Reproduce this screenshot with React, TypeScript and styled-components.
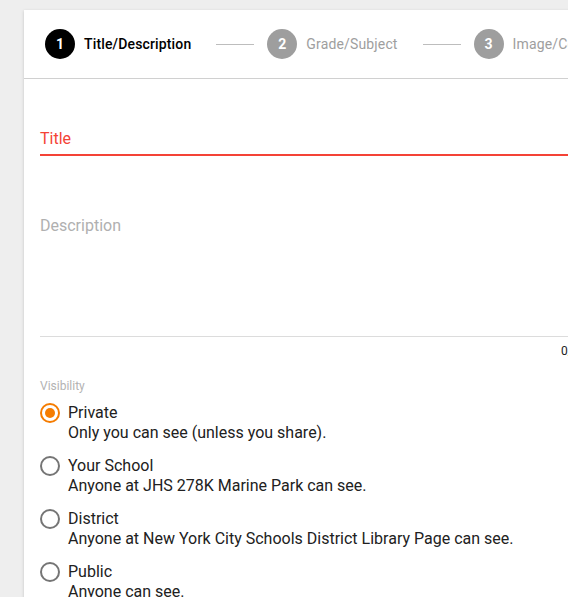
import React from 'react';
import styled, { createGlobalStyle } from 'styled-components';

const GlobalStyle = createGlobalStyle`
	html, body {
		margin: 0;
		padding: 0;
		background: #eeeeee;
		overflow: hidden;
		font-family: Roboto, 'Liberation Sans', sans-serif;
	}
`;

// 카드 영역
const Card = styled.div`
	width: 585px;
	margin: 10px 0 0 24px;
	background: #fff;
	box-shadow: 0 1px 3px rgba(0, 0, 0, 0.18);
	min-height: 620px;
`;

// 상단 단계 표시
const Stepper = styled.div`
	height: 68px;
	display: flex;
	align-items: center;
	padding-left: 21px;
	border-bottom: 1px solid #d0d0d0;
	white-space: nowrap;
`;

const Step = styled.div`
	display: flex;
	align-items: center;
	flex-shrink: 0;
`;

const StepIcon = styled.div<{ active?: boolean }>`
	width: 30px;
	height: 30px;
	border-radius: 50%;
	background: ${(props) => (props.active ? '#000' : '#9e9e9e')};
	color: #fff;
	font-size: 14px;
	font-weight: 700;
	display: flex;
	align-items: center;
	justify-content: center;
`;

const StepLabel = styled.span<{ active?: boolean }>`
	margin-left: 9px;
	font-size: 14px;
	letter-spacing: 0.15px;
	font-weight: ${(props) => (props.active ? 500 : 400)};
	color: ${(props) => (props.active ? '#000' : '#9e9e9e')};
`;

const Connector = styled.div`
	width: 38px;
	height: 1px;
	background: #bdbdbd;
	margin: 0 13px 0 25px;
	flex-shrink: 0;
`;

// 입력 폼
const Form = styled.div`
	padding: 0 16px;
`;

const TitleField = styled.div`
	margin-top: 50px;
	padding-bottom: 6px;
	border-bottom: 2px solid #f44336;
	color: #f44336;
	font-size: 16px;
	line-height: 19px;
`;

const DescField = styled.div`
	margin-top: 60px;
	height: 120px;
	border-bottom: 1px solid #dcdcdc;
	color: #b0b0b0;
	font-size: 16px;
	line-height: 19px;
`;

const Counter = styled.div`
	text-align: right;
	font-size: 12px;
	line-height: 14px;
	margin-top: 7px;
	color: #212121;
`;

const GroupLabel = styled.div`
	margin-top: 21px;
	font-size: 12px;
	line-height: 14px;
	color: #b3b3b3;
`;

const RadioList = styled.div`
	margin-top: 10px;
	display: flex;
	flex-direction: column;
	gap: 13px;
`;

const RadioRow = styled.label`
	display: flex;
	align-items: flex-start;
	gap: 8px;
`;

const RadioCircle = styled.span<{ checked?: boolean }>`
	width: 20px;
	height: 20px;
	box-sizing: border-box;
	border-radius: 50%;
	border: 2px solid ${(props) => (props.checked ? '#f57c00' : '#757575')};
	display: flex;
	align-items: center;
	justify-content: center;
	flex-shrink: 0;
	&::after {
		content: '';
		width: 10px;
		height: 10px;
		border-radius: 50%;
		background: #f57c00;
		display: ${(props) => (props.checked ? 'block' : 'none')};
	}
`;

const RadioText = styled.div`
	font-size: 16px;
	line-height: 20px;
	color: #212121;
	white-space: nowrap;
`;

const steps = ['Title/Description', 'Grade/Subject', 'Image/Cover'];

const options = [
	{ label: 'Private', desc: 'Only you can see (unless you share).' },
	{ label: 'Your School', desc: 'Anyone at JHS 278K Marine Park can see.' },
	{ label: 'District', desc: 'Anyone at New York City Schools District Library Page can see.' },
	{ label: 'Public', desc: 'Anyone can see.' },
];

function App() {
	return (
		<>
			<GlobalStyle />
			<Card>
				<Stepper>
					{steps.map((s, i) => (
						<React.Fragment key={s}>
							{i > 0 && <Connector />}
							<Step>
								<StepIcon active={i === 0}>{i + 1}</StepIcon>
								<StepLabel active={i === 0}>{s}</StepLabel>
							</Step>
						</React.Fragment>
					))}
				</Stepper>
				<Form>
					<TitleField>Title</TitleField>
					<DescField>Description</DescField>
					<Counter>0/500</Counter>
					<GroupLabel>Visibility</GroupLabel>
					<RadioList>
						{options.map((o, i) => (
							<RadioRow key={o.label}>
								<RadioCircle checked={i === 0} />
								<RadioText>
									{o.label}
									<br />
									{o.desc}
								</RadioText>
							</RadioRow>
						))}
					</RadioList>
				</Form>
			</Card>
		</>
	);
}

export default App;
